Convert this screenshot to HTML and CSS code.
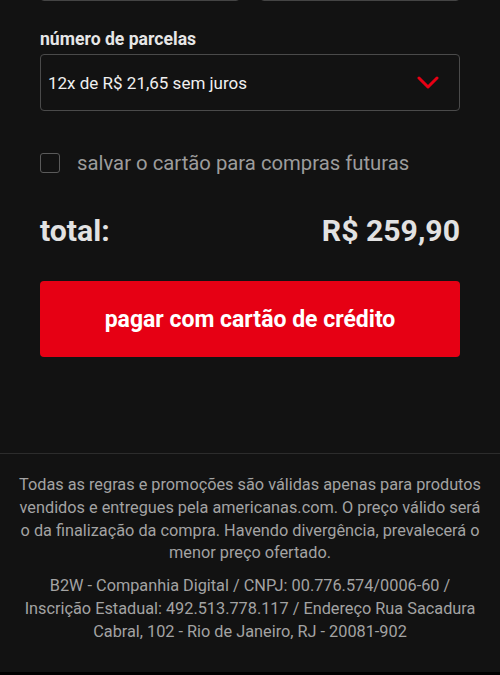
FILE: index.html
```html
<!DOCTYPE html>
<html lang="pt-BR">
<head>
    <meta charset="UTF-8" />
    <meta name="viewport" content="width=device-width, initial-scale=1.0" />
    <title>pagamento</title>
    <link rel="stylesheet" href="styles.css">
</head>
<body>
    <main class="payment">
        <div class="field-row">
            <div class="field-box"></div>
            <div class="field-box"></div>
        </div>

        <label class="field-label" for="installments">número de parcelas</label>
        <div class="select-box" id="installments">
            <span>12x de R$ 21,65 sem juros</span>
            <svg class="chevron" width="22" height="14" viewBox="0 0 22 14">
                <path d="M2 2 L11 11 L20 2" fill="none" stroke="#e60014" stroke-width="3" stroke-linecap="round" stroke-linejoin="round" />
            </svg>
        </div>

        <div class="save-card">
            <span class="checkbox"></span>
            <span class="save-text">salvar o cartão para compras futuras</span>
        </div>

        <div class="total">
            <span>total:</span>
            <span>R$ 259,90</span>
        </div>

        <button class="pay-button">pagar com cartão de crédito</button>
    </main>

    <footer class="legal">
        <p>Todas as regras e promoções são válidas apenas para produtos vendidos e entregues pela americanas.com. O preço válido será o da finalização da compra. Havendo divergência, prevalecerá o menor preço ofertado.</p>
        <p>B2W - Companhia Digital / CNPJ: 00.776.574/0006-60 / Inscrição Estadual: 492.513.778.117 / Endereço Rua Sacadura Cabral, 102 - Rio de Janeiro, RJ - 20081-902</p>
    </footer>
    <div class="bottom-bar"></div>
</body>
</html>
```

FILE: styles.css
```css
body {
    margin: 0;
    padding: 0;
    font-family: Roboto, 'Noto Sans', sans-serif;
    background-color: #121212;
    color: #e6e6e6;
    overflow: hidden;
}

.payment {
    display: flow-root;
    padding: 0 40px;
    height: 453px;
}

.field-row {
    display: flex;
    gap: 20px;
    margin-top: -49px;
}

.field-box {
    flex: 1;
    height: 48px;
    border: 1px solid #444;
    border-radius: 4px;
}

.field-label {
    display: block;
    margin-top: 28px;
    font-size: 17.6px;
    font-weight: 700;
    line-height: 21px;
    color: #e6e6e6;
}

.select-box {
    display: flex;
    align-items: center;
    justify-content: space-between;
    height: 55px;
    margin-top: 4px;
    padding: 0 20px 0 7px;
    border: 1px solid #4a4a4a;
    border-radius: 4px;
    font-size: 17px;
    color: #f0f0f0;
}

.chevron {
    display: block;
    margin-top: 1px;
}

.save-card {
    display: flex;
    align-items: center;
    gap: 17px;
    margin-top: 40px;
}

.checkbox {
    width: 18px;
    height: 18px;
    border: 1px solid #5a5a5a;
    border-radius: 3px;
}

.save-text {
    font-size: 20.3px;
    line-height: 24px;
    color: #9c9c9c;
}

.total {
    display: flex;
    justify-content: space-between;
    align-items: center;
    margin-top: 38px;
    font-size: 30.2px;
    font-weight: 700;
    line-height: 36px;
    color: #e2e2e2;
}

.pay-button {
    display: block;
    width: 100%;
    height: 76px;
    margin-top: 32px;
    background-color: #e60014;
    color: #fff;
    border: none;
    border-radius: 4px;
    font-family: inherit;
    font-size: 23px;
    font-weight: 700;
}

.legal {
    border-top: 1px solid #2c2c2c;
    padding: 20px 16px 28px;
    text-align: center;
    font-size: 16.3px;
    line-height: 22.8px;
    color: #a3a3a3;
}

.legal p {
    margin: 0;
}

.legal p + p {
    margin-top: 10px;
}

.bottom-bar {
    height: 10px;
    background-color: #000;
}
```
